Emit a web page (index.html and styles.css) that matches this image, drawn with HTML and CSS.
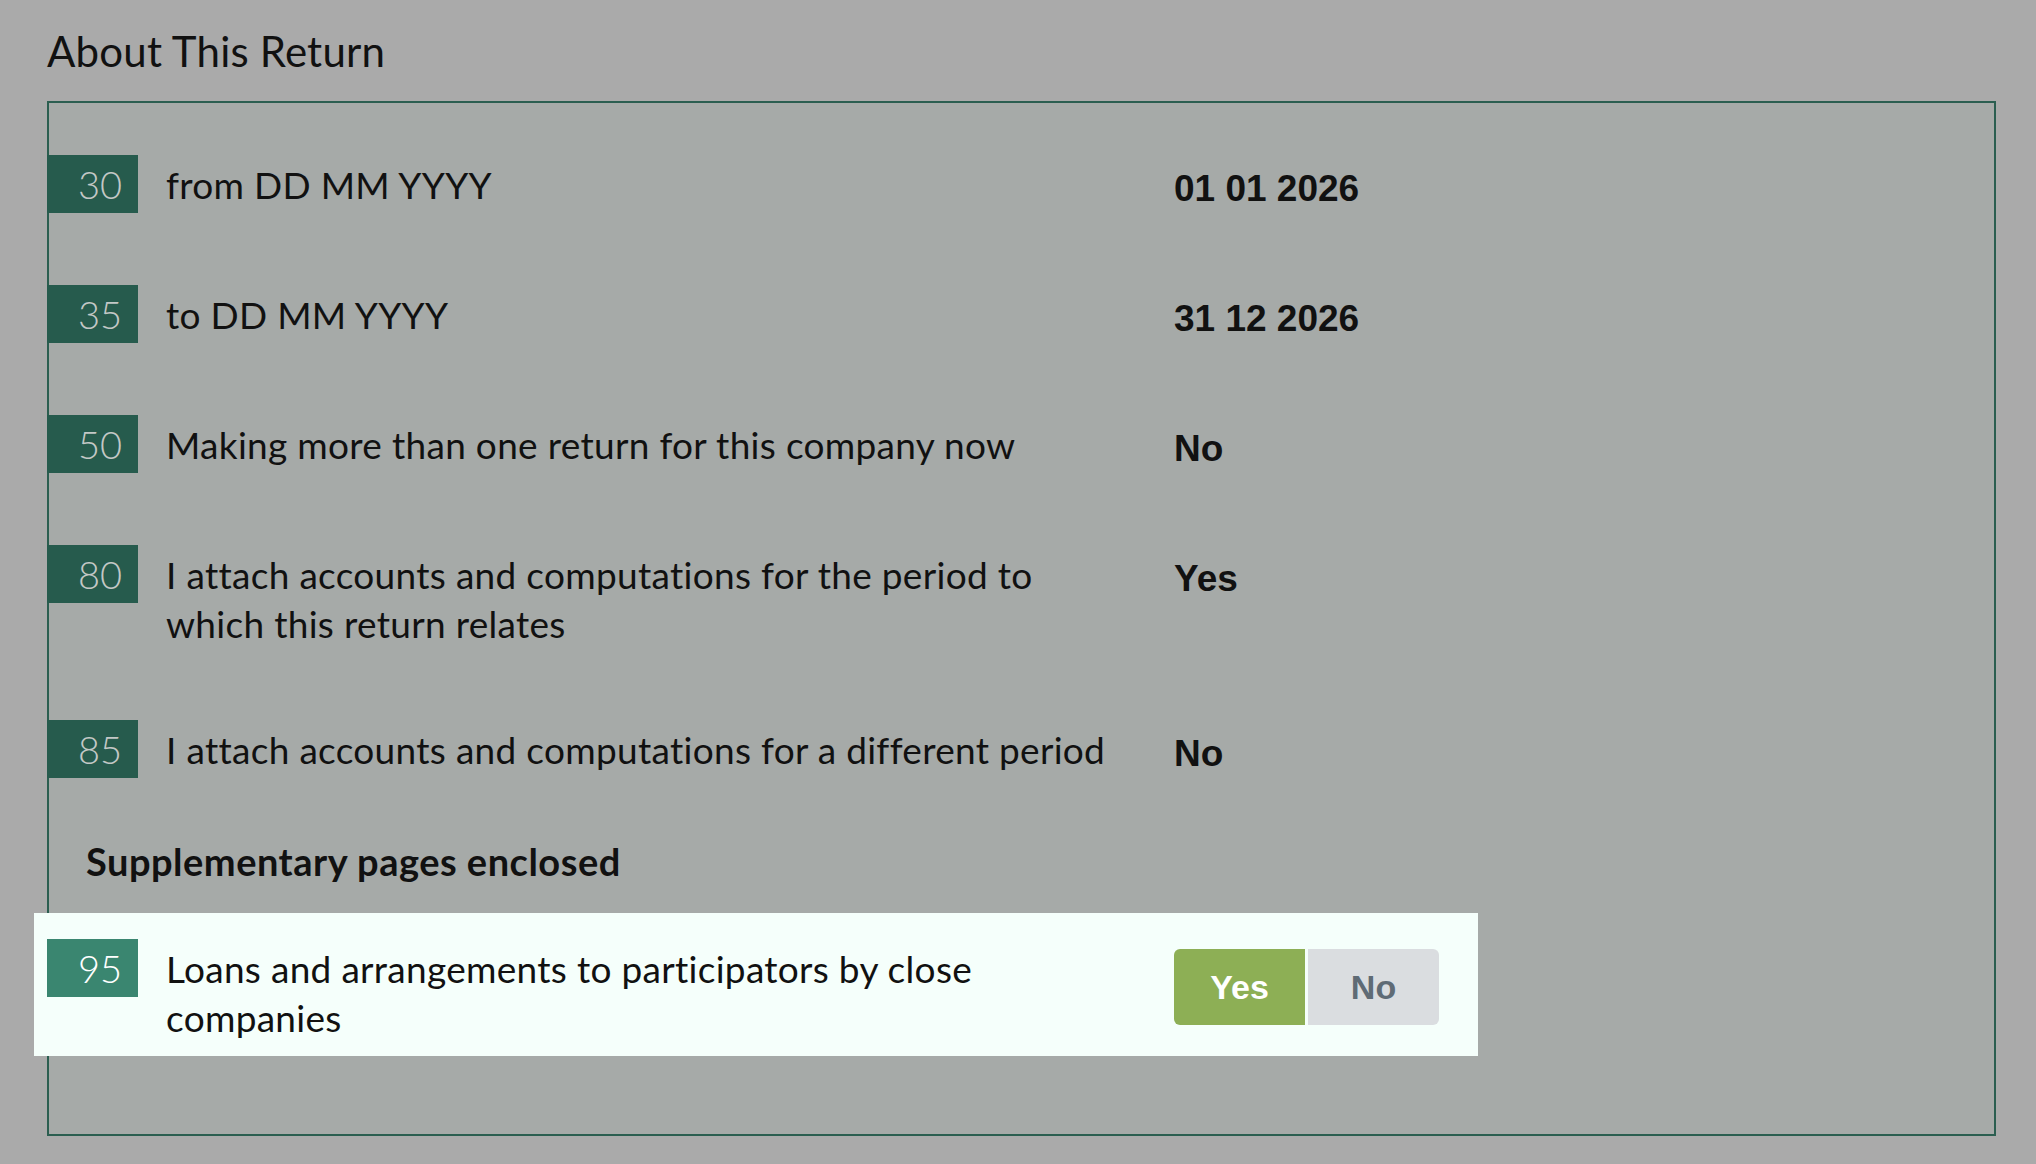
FILE: index.html
```html
<!DOCTYPE html>
<html lang="en">
<head>
  <meta charset="UTF-8">
  <title>About This Return</title>
  <link rel="stylesheet" href="styles.css">
</head>
<body>
  <h1 class="title">About This Return</h1>

  <section class="return-box">
    <div class="rows">
      <div class="row">
        <span class="box-no">30</span>
        <span class="label">from DD MM YYYY</span>
        <span class="value">01 01 2026</span>
      </div>
      <div class="row">
        <span class="box-no">35</span>
        <span class="label">to DD MM YYYY</span>
        <span class="value">31 12 2026</span>
      </div>
      <div class="row">
        <span class="box-no">50</span>
        <span class="label">Making more than one return for this company now</span>
        <span class="value">No</span>
      </div>
      <div class="row">
        <span class="box-no">80</span>
        <span class="label">I attach accounts and computations for the period to which this return relates</span>
        <span class="value">Yes</span>
      </div>
      <div class="row">
        <span class="box-no">85</span>
        <span class="label">I attach accounts and computations for a different period</span>
        <span class="value">No</span>
      </div>
    </div>

    <h3 class="sub-heading">Supplementary pages enclosed</h3>

    <div class="row row-active">
      <span class="box-no">95</span>
      <span class="label">Loans and arrangements to participators by close companies</span>
      <div class="toggle">
        <button class="toggle-btn selected">Yes</button>
        <button class="toggle-btn">No</button>
      </div>
    </div>
  </section>
</body>
</html>
```

FILE: styles.css
```css
body {
  margin: 0;
  padding: 27px 40px 28px 47px;
  background-color: #aaaaaa;
  font-family: Lato, "Noto Sans", sans-serif;
  color: #111;
}
.title {
  margin: 0 0 26px;
  font-size: 42px;
  font-weight: 400;
  line-height: 48px;
  letter-spacing: 0.2px;
}
.return-box {
  border: 2px solid #2b5e50;
  background-color: #a6aaa8;
  padding: 52px 0 78px;
}
.rows {
  display: flex;
  flex-direction: column;
  gap: 72px;
}
.row {
  display: grid;
  grid-template-columns: 91px 980px 265px;
  column-gap: 28px;
  align-items: start;
  margin-left: -2px;
}
.box-no {
  height: 58px;
  line-height: 58px;
  padding-right: 16px;
  text-align: right;
  background-color: #265b4d;
  color: #c3c8c6;
  font-size: 38px;
  font-weight: 300;
}
.label {
  padding: 5px 22px 0 0;
  font-size: 37px;
  line-height: 49px;
  letter-spacing: 0.3px;
}
.value {
  padding-top: 9px;
  font-family: "Liberation Sans", Arial, sans-serif;
  font-weight: bold;
  font-size: 37px;
  line-height: 49px;
}
.sub-heading {
  margin: 59px 0 0 37px;
  font-size: 38px;
  font-weight: bold;
  line-height: 49px;
  letter-spacing: 0.5px;
}
.row-active {
  width: max-content;
  margin: 27px 0 0 -15px;
  padding: 26px 39px 14px 13px;
  background-color: #f5fffb;
}
.row-active .box-no {
  background-color: #3a8670;
  color: #fff;
}
.toggle {
  display: flex;
  gap: 3px;
  margin-top: 10px;
}
.toggle-btn {
  width: 131px;
  height: 76px;
  border: none;
  background-color: #dadde0;
  color: #5f6b75;
  font-family: "Liberation Sans", Arial, sans-serif;
  font-weight: bold;
  font-size: 34px;
}
.toggle-btn:first-child {
  border-radius: 6px 0 0 6px;
}
.toggle-btn:last-child {
  border-radius: 0 6px 6px 0;
}
.toggle-btn.selected {
  background-color: #8daf55;
  color: #fff;
}
```
